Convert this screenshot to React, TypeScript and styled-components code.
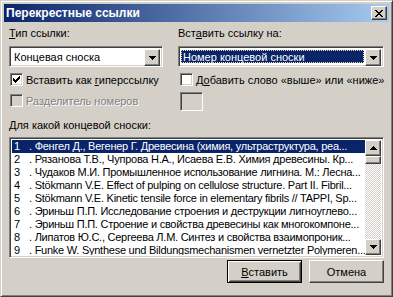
import styled, { createGlobalStyle, css } from 'styled-components';

const GlobalStyle = createGlobalStyle`
  html, body {
    margin: 0;
    padding: 0;
    background: #d4d0c8;
  }
  body {
    font-family: "Liberation Sans", Arial, sans-serif;
    font-size: 11px;
    color: #000;
  }
`;

const raised = css`
  border: 1px solid;
  border-color: #fff #404040 #404040 #fff;
  box-shadow: inset -1px -1px #808080, inset 1px 1px #d4d0c8;
`;

const sunken = css`
  border: 1px solid;
  border-color: #808080 #fff #fff #808080;
  box-shadow: inset 1px 1px #404040, inset -1px -1px #d4d0c8;
`;

const Window = styled.div`
  width: 393px;
  height: 297px;
  box-sizing: border-box;
  background: #d4d0c8;
  border: 1px solid;
  border-color: #d4d0c8 #404040 #404040 #d4d0c8;
  box-shadow: inset 1px 1px #fff, inset -1px -1px #808080;
  padding: 3px;
  display: flex;
  flex-direction: column;
`;

const TitleBar = styled.div`
  height: 18px;
  display: flex;
  align-items: center;
  justify-content: space-between;
  padding: 0 2px 0 2px;
  background: linear-gradient(to right, #0a246a, #a6caf0);
`;

const Title = styled.span`
  color: #fff;
  font-weight: bold;
  font-size: 12px;
`;

const CloseButton = styled.div`
  width: 16px;
  height: 14px;
  box-sizing: border-box;
  background: #d4d0c8;
  display: flex;
  align-items: center;
  justify-content: center;
  ${raised};
`;

const Body = styled.div`
  flex: 1;
  padding: 5px 5px 0;
  display: flex;
  flex-direction: column;
`;

const TopGrid = styled.div`
  display: grid;
  grid-template-columns: 154px 206px;
  column-gap: 15px;
`;

const Column = styled.div`
  display: flex;
  flex-direction: column;
`;

const Label = styled.div<{ $top?: number }>`
  height: 13px;
  line-height: 13px;
  margin-top: ${p => p.$top ?? 0}px;
  white-space: nowrap;
`;

const U = styled.span`
  text-decoration: underline;
`;

const Combo = styled.div`
  margin-top: 6px;
  height: 21px;
  box-sizing: border-box;
  background: #fff;
  display: flex;
  align-items: stretch;
  padding: 2px;
  ${sunken};
`;

const ComboText = styled.div<{ $selected?: boolean }>`
  flex: 1;
  display: flex;
  align-items: center;
  padding-left: 2px;
  margin: 1px 1px 1px 0;
  white-space: nowrap;
  overflow: hidden;
  ${p =>
    p.$selected &&
    css`
      background: #0a246a;
      color: #fff;
      outline: 1px dotted #e8df9c;
      outline-offset: -1px;
    `}
`;

const ArrowButton = styled.div<{ $h?: number }>`
  width: 16px;
  height: ${p => p.$h ?? 17}px;
  box-sizing: border-box;
  background: #d4d0c8;
  display: flex;
  align-items: center;
  justify-content: center;
  flex: none;
  ${raised};
`;

const CheckRow = styled.div<{ $top: number; $indent: number; $disabled?: boolean }>`
  margin-top: ${p => p.$top}px;
  margin-left: ${p => p.$indent}px;
  height: 13px;
  display: flex;
  align-items: center;
  gap: 3px;
  white-space: nowrap;
  color: ${p => (p.$disabled ? '#808080' : '#000')};
  text-shadow: ${p => (p.$disabled ? '1px 1px #fff' : 'none')};
`;

const Box = styled.div<{ $disabled?: boolean }>`
  width: 13px;
  height: 13px;
  box-sizing: border-box;
  background: ${p => (p.$disabled ? '#d4d0c8' : '#fff')};
  display: flex;
  align-items: center;
  justify-content: center;
  flex: none;
  ${sunken};
`;

const SmallEdit = styled.div`
  margin-top: 6px;
  margin-left: 2px;
  width: 23px;
  height: 19px;
  box-sizing: border-box;
  background: #d4d0c8;
  ${sunken};
`;

const ListBox = styled.div`
  margin-top: 5px;
  height: 121px;
  box-sizing: border-box;
  background: #fff;
  padding: 2px;
  display: flex;
  ${sunken};
`;

const Items = styled.div`
  flex: 1;
  min-width: 0;
  overflow: hidden;
`;

const Item = styled.div<{ $selected?: boolean }>`
  height: 13px;
  line-height: 13px;
  padding-left: 2px;
  display: flex;
  white-space: nowrap;
  overflow: hidden;
  background: ${p => (p.$selected ? '#0a246a' : 'transparent')};
  color: ${p => (p.$selected ? '#fff' : '#000')};
`;

const Num = styled.span`
  width: 15px;
  flex: none;
`;

const ItemText = styled.span`
  letter-spacing: -0.25px;
`;

const ScrollBar = styled.div`
  width: 16px;
  display: flex;
  flex-direction: column;
  flex: none;
`;

const Thumb = styled.div`
  height: 8px;
  box-sizing: border-box;
  background: #d4d0c8;
  ${raised};
`;

const Track = styled.div`
  flex: 1;
  background: repeating-conic-gradient(#fff 0 25%, #d4d0c8 0 50%) 0 0 / 2px 2px;
`;

const ButtonRow = styled.div`
  margin-top: 2px;
  display: flex;
  justify-content: flex-end;
  gap: 7px;
`;

const Button = styled.div<{ $default?: boolean }>`
  width: 75px;
  height: 23px;
  box-sizing: border-box;
  background: #d4d0c8;
  display: flex;
  align-items: center;
  justify-content: center;
  ${p =>
    p.$default
      ? css`
          border: 1px solid #000;
          box-shadow: inset 1px 1px #fff, inset -1px -1px #404040,
            inset 2px 2px #d4d0c8, inset -2px -2px #808080;
        `
      : raised};
`;

const Arrow = ({ down = true }: { down?: boolean }) => (
  <svg width="7" height="4" viewBox="0 0 7 4" shapeRendering="crispEdges">
    <polygon points={down ? '0,0 7,0 3.5,4' : '0,4 7,4 3.5,0'} fill="#000" />
  </svg>
);

const checkPixels = [
  '......X',
  '.....XX',
  'X...XXX',
  'XX.XXX.',
  'XXXXX..',
  '.XXX...',
  '..X....',
];

const CheckMark = ({ color = '#000' }: { color?: string }) => (
  <svg width="7" height="7" viewBox="0 0 7 7" shapeRendering="crispEdges">
    {checkPixels.map((row, y) =>
      row
        .split('')
        .map((c, x) =>
          c === 'X' ? <rect key={`${x}-${y}`} x={x} y={y} width="1" height="1" fill={color} /> : null
        )
    )}
  </svg>
);

const CloseIcon = () => (
  <svg width="8" height="7" viewBox="0 0 8 7" shapeRendering="crispEdges">
    <path d="M0.5 0 L7.5 7 M7.5 0 L0.5 7" stroke="#000" strokeWidth="2" />
  </svg>
);

const notes = [
  'Фенгел Д., Вегенер Г. Древесина (химия, ультраструктура, реа...',
  'Рязанова Т.В., Чупрова Н.А., Исаева Е.В. Химия древесины. Кр...',
  'Чудаков М.И. Промышленное использование лигнина. М.: Лесна...',
  'Stökmann V.E. Effect of pulping on cellulose structure. Part II. Fibril...',
  'Stökmann V.E. Kinetic tensile force in elementary fibrils // TAPPI, Sp...',
  'Эриньш П.П. Исследование строения и деструкции лигноуглево...',
  'Эриньш П.П. Строение и свойства древесины как многокомпоне...',
  'Липатов Ю.С., Сергеева Л.М. Синтез и свойства взаимопроник...',
  'Funke W. Synthese und Bildungsmechanismen vernetzter Polymeren...',
];

export default function App() {
  return (
    <>
      <GlobalStyle />
      <Window>
        <TitleBar>
          <Title>Перекрестные ссылки</Title>
          <CloseButton>
            <CloseIcon />
          </CloseButton>
        </TitleBar>
        <Body>
          <TopGrid>
            <Column>
              <Label>
                <U>Т</U>ип ссылки:
              </Label>
              <Combo>
                <ComboText>Концевая сноска</ComboText>
                <ArrowButton>
                  <Arrow />
                </ArrowButton>
              </Combo>
              <CheckRow $top={6} $indent={1}>
                <Box>
                  <CheckMark />
                </Box>
                <span>
                  Вставить как <U>г</U>иперссылку
                </span>
              </CheckRow>
              <CheckRow $top={8} $indent={1} $disabled>
                <Box $disabled />
                <span>Разделитель номеров</span>
              </CheckRow>
            </Column>
            <Column>
              <Label>
                Вст<U>а</U>вить ссылку на:
              </Label>
              <Combo>
                <ComboText $selected>Номер концевой сноски</ComboText>
                <ArrowButton>
                  <Arrow />
                </ArrowButton>
              </Combo>
              <CheckRow $top={6} $indent={2}>
                <Box />
                <span>
                  Д<U>о</U>бавить слово «выше» или «ниже»
                </span>
              </CheckRow>
              <SmallEdit />
            </Column>
          </TopGrid>
          <Label $top={8}>
            <U>Д</U>ля какой концевой сноски:
          </Label>
          <ListBox>
            <Items>
              {notes.map((text, i) => (
                <Item key={i} $selected={i === 0}>
                  <Num>{i + 1}</Num>
                  <ItemText>. {text}</ItemText>
                </Item>
              ))}
            </Items>
            <ScrollBar>
              <ArrowButton $h={16}>
                <Arrow down={false} />
              </ArrowButton>
              <Thumb />
              <Track />
              <ArrowButton $h={16}>
                <Arrow />
              </ArrowButton>
            </ScrollBar>
          </ListBox>
          <ButtonRow>
            <Button $default>
              <span>
                <U>В</U>ставить
              </span>
            </Button>
            <Button>Отмена</Button>
          </ButtonRow>
        </Body>
      </Window>
    </>
  );
}
